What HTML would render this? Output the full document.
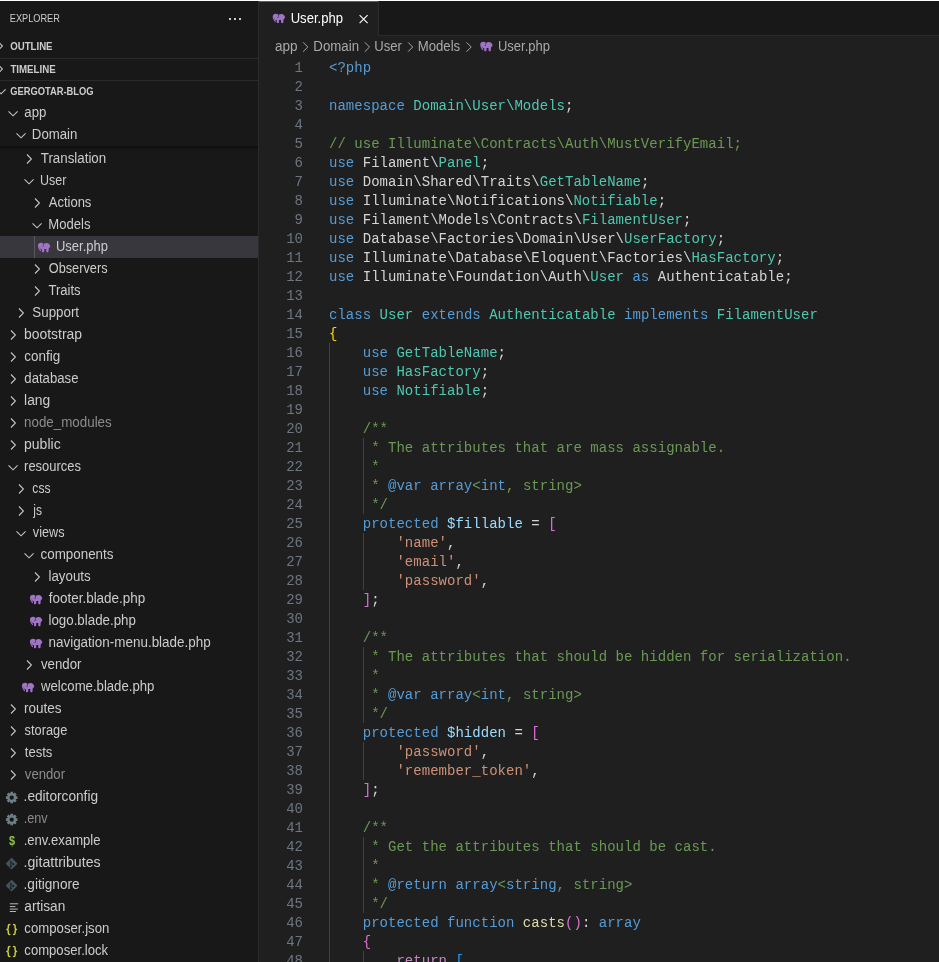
<!DOCTYPE html>
<html><head><meta charset="utf-8"><title>User.php</title>
<style>
*{box-sizing:border-box;margin:0;padding:0}
html,body{width:939px;height:962px;overflow:hidden;background:#1f1f1f}
body{font-family:"Liberation Sans",sans-serif;font-size:13px;color:#cccccc;position:relative}
#tl0{position:absolute;left:0;top:0;width:939px;height:1px;background:#ffffff}
#tl1b{position:absolute;left:259px;top:1px;width:119px;height:1px;background:#0078d4}

#side{position:absolute;left:0;top:0;width:259px;height:962px;background:#181818;border-right:1px solid #2b2b2b;overflow:hidden}
#side .title{position:absolute;left:10px;top:11px;font-size:11px;line-height:14px;color:#cccccc;white-space:nowrap}
.dt{position:absolute;top:18px;width:2px;height:2px;background:#cccccc}
.ph{position:absolute;left:0;width:258px;height:22px;font-size:11px;font-weight:bold;line-height:22px;color:#cccccc}
.ph span.pt{position:absolute;left:10px;top:0;transform-origin:0 50%;white-space:nowrap}
.ph .tw{position:absolute;left:-9px;top:3px;width:16px;height:16px}
.sep{position:absolute;left:0;width:258px;height:1px;background:#2b2b2b}
.row{position:absolute;left:0;width:258px;height:22px;line-height:22px;font-size:14px;color:#cccccc;white-space:nowrap}
.row.sel{background:#37373d}
.row.dim .lb{color:#8c8c8c}
.row .lb{position:absolute;top:0;}
.row .tw{position:absolute;top:3px;width:16px;height:16px}
.ch{position:absolute;left:0;top:0}
.row .fi{position:absolute;top:0;width:16px;height:22px}
.ic{position:absolute;left:2px;top:7px}
.ic2{position:absolute;left:0px;top:3px}
.gl{position:absolute;left:2px;top:0;font-size:13px}
.shadow{position:absolute;left:0;top:146px;width:258px;height:4px;background:linear-gradient(#0d0d0d,rgba(13,13,13,0))}
.tg{position:absolute;width:1px;background:#585858}
#tabs{position:absolute;left:259px;top:0;width:680px;height:36px;background:#181818;border-bottom:1px solid #2b2b2b}
#tab{position:absolute;left:0;top:0;width:120px;height:36px;background:#1f1f1f;border-right:1px solid #2b2b2b}
#tab .nm{position:absolute;left:32px;top:11px;font-size:14px;line-height:16px;color:#ffffff}
#bc{position:absolute;left:259px;top:35px;width:680px;height:22px;line-height:22px;font-size:14px;color:#a9a9a9;white-space:nowrap}
#bc span{position:absolute;top:1px;}
#code{position:absolute;left:259px;top:59px;width:680px;font-family:"Liberation Mono",monospace;font-size:14px;line-height:19px;letter-spacing:0.027px}
.ln{height:19px;white-space:pre;position:relative}
.no{position:absolute;left:0;width:44px;text-align:right;color:#6e7681}
.cd{position:absolute;left:70px}
.ig{position:absolute;width:1px;background:#404040}
.k{color:#569cd6}.t{color:#4ec9b0}.c{color:#6a9955}.s{color:#ce9178}.v{color:#9cdcfe}.f{color:#dcdcaa}.w{color:#d4d4d4}
.b1{color:#ffd700}.b2{color:#da70d6}.b3{color:#179fff}.r{color:#c586c0}
#root{position:absolute;left:0;top:0;width:939px;height:962px;will-change:transform}
</style></head><body><div id="root">
<div id="side">
<div class="title" id="title" style="transform:translate(-0.23px,0px) scaleX(0.8357);transform-origin:0 50%;">EXPLORER</div>
<i class="dt" style="left:229px"></i><i class="dt" style="left:234px"></i><i class="dt" style="left:239px"></i>
<div class="ph" style="top:35px"><span class="tw"><svg class="ch" viewBox="0 0 16 16" width="16" height="16"><path fill="none" stroke="#c5c5c5" stroke-width="1.1" d="M7 3.500L11.400 8L7 12.500"/></svg></span><span class="pt" id="p0" style="transform:translate(0.18px,0px) scaleX(0.8775);transform-origin:0 50%;">OUTLINE</span></div>
<div class="sep" style="top:58px"></div>
<div class="ph" style="top:58px"><span class="tw"><svg class="ch" viewBox="0 0 16 16" width="16" height="16"><path fill="none" stroke="#c5c5c5" stroke-width="1.1" d="M7 3.500L11.400 8L7 12.500"/></svg></span><span class="pt" id="p1" style="transform:translate(0.4px,0px) scaleX(0.8824);transform-origin:0 50%;">TIMELINE</span></div>
<div class="sep" style="top:80px"></div>
<div class="ph" style="top:80px"><span class="tw" style="left:-8px"><svg class="ch" viewBox="0 0 16 16" width="16" height="16"><path fill="none" stroke="#c5c5c5" stroke-width="1.1" d="M4.500 6.400L9.050 10.800L13.600 6.400"/></svg></span><span class="pt" id="p2" style="transform:translate(0.19px,0px) scaleX(0.8494);transform-origin:0 50%;">GERGOTAR-BLOG</span></div>
<div class="row" style="top:102px"><span class="tw" style="left:4px"><svg class="ch" viewBox="0 0 16 16" width="16" height="16"><path fill="none" stroke="#c5c5c5" stroke-width="1.1" d="M4.500 6.400L9.050 10.800L13.600 6.400"/></svg></span><span class="lb" id="r0" style="left:24px;transform:translate(0.33px,-0.6px) scaleX(0.9438);transform-origin:0 50%;">app</span></div>
<div class="row" style="top:124px"><span class="tw" style="left:12px"><svg class="ch" viewBox="0 0 16 16" width="16" height="16"><path fill="none" stroke="#c5c5c5" stroke-width="1.1" d="M4.500 6.400L9.050 10.800L13.600 6.400"/></svg></span><span class="lb" id="r1" style="left:32px;transform:translate(-0.14px,-0.6px) scaleX(0.9441);transform-origin:0 50%;">Domain</span></div>
<div class="row" style="top:148px"><span class="tw" style="left:20px"><svg class="ch" viewBox="0 0 16 16" width="16" height="16"><path fill="none" stroke="#c5c5c5" stroke-width="1.1" d="M7 3.500L11.400 8L7 12.500"/></svg></span><span class="lb" id="r2" style="left:40px;transform:translate(0.76px,-0.6px) scaleX(0.952);transform-origin:0 50%;">Translation</span></div>
<div class="row" style="top:170px"><span class="tw" style="left:20px"><svg class="ch" viewBox="0 0 16 16" width="16" height="16"><path fill="none" stroke="#c5c5c5" stroke-width="1.1" d="M4.500 6.400L9.050 10.800L13.600 6.400"/></svg></span><span class="lb" id="r3" style="left:40px;transform:translate(0.11px,-0.6px) scaleX(0.8912);transform-origin:0 50%;">User</span></div>
<div class="row" style="top:192px"><span class="tw" style="left:28px"><svg class="ch" viewBox="0 0 16 16" width="16" height="16"><path fill="none" stroke="#c5c5c5" stroke-width="1.1" d="M7 3.500L11.400 8L7 12.500"/></svg></span><span class="lb" id="r4" style="left:48px;transform:translate(0.7px,-0.6px) scaleX(0.9297);transform-origin:0 50%;">Actions</span></div>
<div class="row" style="top:214px"><span class="tw" style="left:28px"><svg class="ch" viewBox="0 0 16 16" width="16" height="16"><path fill="none" stroke="#c5c5c5" stroke-width="1.1" d="M4.500 6.400L9.050 10.800L13.600 6.400"/></svg></span><span class="lb" id="r5" style="left:48px;transform:translate(0.27px,-0.6px) scaleX(0.9349);transform-origin:0 50%;">Models</span></div>
<div class="row sel" style="top:236px"><span class="fi" style="left:36px"><svg style="position:absolute;left:1px;top:6px" viewBox="0 0 14 11" width="14" height="11"><g transform="translate(0.9,0.8)"><path fill="#a074c4" d="M5.45 0.7C4.9 0.25 4.1 0 3.1 0C1.300 0 0 1.200 0 3C0 4.400 0.500 5.600 1.200 6.800C1.700 7.600 2.200 8.400 2.800 8.400C3.200 8.400 3.300 8 3.100 7.600L2.600 6.500L3.400 6.300L4.100 6.600L4.100 8.700C4.100 9.100 4.400 9.350 4.800 9.350L5.600 9.350C6 9.350 6.300 9.100 6.300 8.700L6.400 6.300L8.300 6.300L8.400 8.700C8.400 9.100 8.700 9.350 9.100 9.350L9.900 9.350C10.300 9.350 10.600 9.100 10.600 8.700L10.800 5.800C11.500 5.200 12.100 4.300 12.400 3.500C12 1.600 10.600 0.250 8.800 0.250C7.600 0.250 6.600 0.600 6 1.100L5.900 3.200C5.800 3.900 5.200 4.300 4.600 4.200L4.600 3.800C5.200 3.800 5.500 3.500 5.500 3Z"/><path stroke="#37373d" stroke-width="0.45" d="M1.300 5L2.900 6.300"/></g></svg></span><span class="lb" id="r6" style="left:56px;transform:translate(-0.03px,-0.6px) scaleX(0.9266);transform-origin:0 50%;">User.php</span></div>
<div class="row" style="top:258px"><span class="tw" style="left:28px"><svg class="ch" viewBox="0 0 16 16" width="16" height="16"><path fill="none" stroke="#c5c5c5" stroke-width="1.1" d="M7 3.500L11.400 8L7 12.500"/></svg></span><span class="lb" id="r7" style="left:48px;transform:translate(0.75px,-0.6px) scaleX(0.9098);transform-origin:0 50%;">Observers</span></div>
<div class="row" style="top:280px"><span class="tw" style="left:28px"><svg class="ch" viewBox="0 0 16 16" width="16" height="16"><path fill="none" stroke="#c5c5c5" stroke-width="1.1" d="M7 3.500L11.400 8L7 12.500"/></svg></span><span class="lb" id="r8" style="left:48px;transform:translate(0.47px,-0.6px) scaleX(0.9333);transform-origin:0 50%;">Traits</span></div>
<div class="row" style="top:302px"><span class="tw" style="left:12px"><svg class="ch" viewBox="0 0 16 16" width="16" height="16"><path fill="none" stroke="#c5c5c5" stroke-width="1.1" d="M7 3.500L11.400 8L7 12.500"/></svg></span><span class="lb" id="r9" style="left:32px;transform:translate(0.32px,-0.6px) scaleX(0.9526);transform-origin:0 50%;">Support</span></div>
<div class="row" style="top:324px"><span class="tw" style="left:4px"><svg class="ch" viewBox="0 0 16 16" width="16" height="16"><path fill="none" stroke="#c5c5c5" stroke-width="1.1" d="M7 3.500L11.400 8L7 12.500"/></svg></span><span class="lb" id="r10" style="left:24px;transform:translate(0.06px,-0.6px) scaleX(0.993);transform-origin:0 50%;">bootstrap</span></div>
<div class="row" style="top:346px"><span class="tw" style="left:4px"><svg class="ch" viewBox="0 0 16 16" width="16" height="16"><path fill="none" stroke="#c5c5c5" stroke-width="1.1" d="M7 3.500L11.400 8L7 12.500"/></svg></span><span class="lb" id="r11" style="left:24px;transform:translate(0.32px,-0.6px) scaleX(0.9611);transform-origin:0 50%;">config</span></div>
<div class="row" style="top:368px"><span class="tw" style="left:4px"><svg class="ch" viewBox="0 0 16 16" width="16" height="16"><path fill="none" stroke="#c5c5c5" stroke-width="1.1" d="M7 3.500L11.400 8L7 12.500"/></svg></span><span class="lb" id="r12" style="left:24px;transform:translate(0.33px,-0.6px) scaleX(0.9398);transform-origin:0 50%;">database</span></div>
<div class="row" style="top:390px"><span class="tw" style="left:4px"><svg class="ch" viewBox="0 0 16 16" width="16" height="16"><path fill="none" stroke="#c5c5c5" stroke-width="1.1" d="M7 3.500L11.400 8L7 12.500"/></svg></span><span class="lb" id="r13" style="left:24px;transform:translate(0.06px,-0.6px) scaleX(0.988);transform-origin:0 50%;">lang</span></div>
<div class="row dim" style="top:412px"><span class="tw" style="left:4px"><svg class="ch" viewBox="0 0 16 16" width="16" height="16"><path fill="none" stroke="#c5c5c5" stroke-width="1.1" d="M7 3.500L11.400 8L7 12.500"/></svg></span><span class="lb" id="r14" style="left:24px;transform:translate(0.08px,-0.6px) scaleX(0.9543);transform-origin:0 50%;">node_modules</span></div>
<div class="row" style="top:434px"><span class="tw" style="left:4px"><svg class="ch" viewBox="0 0 16 16" width="16" height="16"><path fill="none" stroke="#c5c5c5" stroke-width="1.1" d="M7 3.500L11.400 8L7 12.500"/></svg></span><span class="lb" id="r15" style="left:24px;transform:translate(0.05px,-0.6px) scaleX(1.0);transform-origin:0 50%;">public</span></div>
<div class="row" style="top:456px"><span class="tw" style="left:4px"><svg class="ch" viewBox="0 0 16 16" width="16" height="16"><path fill="none" stroke="#c5c5c5" stroke-width="1.1" d="M4.500 6.400L9.050 10.800L13.600 6.400"/></svg></span><span class="lb" id="r16" style="left:24px;transform:translate(0.11px,-0.6px) scaleX(0.9245);transform-origin:0 50%;">resources</span></div>
<div class="row" style="top:478px"><span class="tw" style="left:12px"><svg class="ch" viewBox="0 0 16 16" width="16" height="16"><path fill="none" stroke="#c5c5c5" stroke-width="1.1" d="M7 3.500L11.400 8L7 12.500"/></svg></span><span class="lb" id="r17" style="left:32px;transform:translate(0.37px,-0.6px) scaleX(0.86);transform-origin:0 50%;">css</span></div>
<div class="row" style="top:500px"><span class="tw" style="left:12px"><svg class="ch" viewBox="0 0 16 16" width="16" height="16"><path fill="none" stroke="#c5c5c5" stroke-width="1.1" d="M7 3.500L11.400 8L7 12.500"/></svg></span><span class="lb" id="r18" style="left:32px;transform:translate(1.23px,-0.6px) scaleX(0.8585);transform-origin:0 50%;">js</span></div>
<div class="row" style="top:522px"><span class="tw" style="left:12px"><svg class="ch" viewBox="0 0 16 16" width="16" height="16"><path fill="none" stroke="#c5c5c5" stroke-width="1.1" d="M4.500 6.400L9.050 10.800L13.600 6.400"/></svg></span><span class="lb" id="r19" style="left:32px;transform:translate(0.8px,-0.6px) scaleX(0.9043);transform-origin:0 50%;">views</span></div>
<div class="row" style="top:544px"><span class="tw" style="left:20px"><svg class="ch" viewBox="0 0 16 16" width="16" height="16"><path fill="none" stroke="#c5c5c5" stroke-width="1.1" d="M4.500 6.400L9.050 10.800L13.600 6.400"/></svg></span><span class="lb" id="r20" style="left:40px;transform:translate(0.52px,-0.6px) scaleX(0.9568);transform-origin:0 50%;">components</span></div>
<div class="row" style="top:566px"><span class="tw" style="left:28px"><svg class="ch" viewBox="0 0 16 16" width="16" height="16"><path fill="none" stroke="#c5c5c5" stroke-width="1.1" d="M7 3.500L11.400 8L7 12.500"/></svg></span><span class="lb" id="r21" style="left:48px;transform:translate(0.49px,-0.6px) scaleX(0.9503);transform-origin:0 50%;">layouts</span></div>
<div class="row" style="top:588px"><span class="fi" style="left:28px"><svg style="position:absolute;left:1px;top:6px" viewBox="0 0 14 11" width="14" height="11"><g transform="translate(0.9,0.8)"><path fill="#a074c4" d="M5.45 0.7C4.9 0.25 4.1 0 3.1 0C1.300 0 0 1.200 0 3C0 4.400 0.500 5.600 1.200 6.800C1.700 7.600 2.200 8.400 2.800 8.400C3.200 8.400 3.300 8 3.100 7.600L2.600 6.500L3.400 6.300L4.100 6.600L4.100 8.700C4.100 9.100 4.400 9.350 4.800 9.350L5.600 9.350C6 9.350 6.300 9.100 6.300 8.700L6.400 6.300L8.300 6.300L8.400 8.700C8.400 9.100 8.700 9.350 9.100 9.350L9.900 9.350C10.300 9.350 10.600 9.100 10.600 8.700L10.800 5.800C11.500 5.200 12.100 4.300 12.400 3.500C12 1.600 10.600 0.250 8.800 0.250C7.600 0.250 6.600 0.600 6 1.100L5.900 3.200C5.800 3.900 5.200 4.300 4.600 4.200L4.600 3.800C5.200 3.800 5.500 3.500 5.500 3Z"/><path stroke="#181818" stroke-width="0.45" d="M1.300 5L2.900 6.300"/></g></svg></span><span class="lb" id="r22" style="left:48px;transform:translate(0.7px,-0.6px) scaleX(0.962);transform-origin:0 50%;">footer.blade.php</span></div>
<div class="row" style="top:610px"><span class="fi" style="left:28px"><svg style="position:absolute;left:1px;top:6px" viewBox="0 0 14 11" width="14" height="11"><g transform="translate(0.9,0.8)"><path fill="#a074c4" d="M5.45 0.7C4.9 0.25 4.1 0 3.1 0C1.300 0 0 1.200 0 3C0 4.400 0.500 5.600 1.200 6.800C1.700 7.600 2.200 8.400 2.800 8.400C3.200 8.400 3.300 8 3.100 7.600L2.600 6.500L3.400 6.300L4.100 6.600L4.100 8.700C4.100 9.100 4.400 9.350 4.800 9.350L5.600 9.350C6 9.350 6.300 9.100 6.300 8.700L6.400 6.300L8.300 6.300L8.400 8.700C8.400 9.100 8.700 9.350 9.100 9.350L9.900 9.350C10.300 9.350 10.600 9.100 10.600 8.700L10.800 5.800C11.500 5.200 12.100 4.300 12.400 3.500C12 1.600 10.600 0.250 8.800 0.250C7.600 0.250 6.600 0.600 6 1.100L5.900 3.200C5.800 3.900 5.200 4.300 4.600 4.200L4.600 3.800C5.200 3.800 5.500 3.500 5.500 3Z"/><path stroke="#181818" stroke-width="0.45" d="M1.300 5L2.900 6.300"/></g></svg></span><span class="lb" id="r23" style="left:48px;transform:translate(0.49px,-0.6px) scaleX(0.9514);transform-origin:0 50%;">logo.blade.php</span></div>
<div class="row" style="top:632px"><span class="fi" style="left:28px"><svg style="position:absolute;left:1px;top:6px" viewBox="0 0 14 11" width="14" height="11"><g transform="translate(0.9,0.8)"><path fill="#a074c4" d="M5.45 0.7C4.9 0.25 4.1 0 3.1 0C1.300 0 0 1.200 0 3C0 4.400 0.500 5.600 1.200 6.800C1.700 7.600 2.200 8.400 2.800 8.400C3.200 8.400 3.300 8 3.100 7.600L2.600 6.500L3.400 6.300L4.100 6.600L4.100 8.700C4.100 9.100 4.400 9.350 4.800 9.350L5.600 9.350C6 9.350 6.300 9.100 6.300 8.700L6.400 6.300L8.300 6.300L8.400 8.700C8.400 9.100 8.700 9.350 9.100 9.350L9.900 9.350C10.300 9.350 10.600 9.100 10.600 8.700L10.800 5.800C11.500 5.200 12.100 4.300 12.400 3.500C12 1.600 10.600 0.250 8.800 0.250C7.600 0.250 6.600 0.600 6 1.100L5.900 3.200C5.800 3.900 5.200 4.300 4.600 4.200L4.600 3.800C5.200 3.800 5.500 3.500 5.500 3Z"/><path stroke="#181818" stroke-width="0.45" d="M1.300 5L2.900 6.300"/></g></svg></span><span class="lb" id="r24" style="left:48px;transform:translate(0.48px,-0.6px) scaleX(0.9604);transform-origin:0 50%;">navigation-menu.blade.php</span></div>
<div class="row" style="top:654px"><span class="tw" style="left:20px"><svg class="ch" viewBox="0 0 16 16" width="16" height="16"><path fill="none" stroke="#c5c5c5" stroke-width="1.1" d="M7 3.500L11.400 8L7 12.500"/></svg></span><span class="lb" id="r25" style="left:40px;transform:translate(1.0px,-0.6px) scaleX(0.945);transform-origin:0 50%;">vendor</span></div>
<div class="row" style="top:676px"><span class="fi" style="left:20px"><svg style="position:absolute;left:1px;top:6px" viewBox="0 0 14 11" width="14" height="11"><g transform="translate(0.9,0.8)"><path fill="#a074c4" d="M5.45 0.7C4.9 0.25 4.1 0 3.1 0C1.300 0 0 1.200 0 3C0 4.400 0.500 5.600 1.200 6.800C1.700 7.600 2.200 8.400 2.800 8.400C3.200 8.400 3.300 8 3.100 7.600L2.600 6.500L3.400 6.300L4.100 6.600L4.100 8.700C4.100 9.100 4.400 9.350 4.800 9.350L5.600 9.350C6 9.350 6.300 9.100 6.300 8.700L6.400 6.300L8.300 6.300L8.400 8.700C8.400 9.100 8.700 9.350 9.100 9.350L9.900 9.350C10.300 9.350 10.600 9.100 10.600 8.700L10.800 5.800C11.500 5.200 12.100 4.300 12.400 3.500C12 1.600 10.600 0.250 8.800 0.250C7.600 0.250 6.600 0.600 6 1.100L5.900 3.200C5.800 3.900 5.200 4.300 4.600 4.200L4.600 3.800C5.200 3.800 5.500 3.500 5.500 3Z"/><path stroke="#181818" stroke-width="0.45" d="M1.300 5L2.900 6.300"/></g></svg></span><span class="lb" id="r26" style="left:40px;transform:translate(1.0px,-0.6px) scaleX(0.9397);transform-origin:0 50%;">welcome.blade.php</span></div>
<div class="row" style="top:698px"><span class="tw" style="left:4px"><svg class="ch" viewBox="0 0 16 16" width="16" height="16"><path fill="none" stroke="#c5c5c5" stroke-width="1.1" d="M7 3.500L11.400 8L7 12.500"/></svg></span><span class="lb" id="r27" style="left:24px;transform:translate(0.08px,-0.6px) scaleX(0.9642);transform-origin:0 50%;">routes</span></div>
<div class="row" style="top:720px"><span class="tw" style="left:4px"><svg class="ch" viewBox="0 0 16 16" width="16" height="16"><path fill="none" stroke="#c5c5c5" stroke-width="1.1" d="M7 3.500L11.400 8L7 12.500"/></svg></span><span class="lb" id="r28" style="left:24px;transform:translate(0.57px,-0.6px) scaleX(0.9152);transform-origin:0 50%;">storage</span></div>
<div class="row" style="top:742px"><span class="tw" style="left:4px"><svg class="ch" viewBox="0 0 16 16" width="16" height="16"><path fill="none" stroke="#c5c5c5" stroke-width="1.1" d="M7 3.500L11.400 8L7 12.500"/></svg></span><span class="lb" id="r29" style="left:24px;transform:translate(0.8px,-0.6px) scaleX(0.9333);transform-origin:0 50%;">tests</span></div>
<div class="row dim" style="top:764px"><span class="tw" style="left:4px"><svg class="ch" viewBox="0 0 16 16" width="16" height="16"><path fill="none" stroke="#c5c5c5" stroke-width="1.1" d="M7 3.500L11.400 8L7 12.500"/></svg></span><span class="lb" id="r30" style="left:24px;transform:translate(0.8px,-0.6px) scaleX(0.9404);transform-origin:0 50%;">vendor</span></div>
<div class="row" style="top:786px"><span class="fi" style="left:4px"><svg class="ic2" viewBox="0 0 16 16" width="16" height="16"><g transform="translate(0,0.5)"><path fill="#6d8086" fill-rule="evenodd" d="M12.00 6.77 L13.46 6.81 L13.46 9.39 L12.00 9.43 L11.68 10.20 L12.68 11.26 L10.86 13.08 L9.80 12.08 L9.03 12.40 L8.99 13.86 L6.41 13.86 L6.37 12.40 L5.60 12.08 L4.54 13.08 L2.72 11.26 L3.72 10.20 L3.40 9.43 L1.94 9.39 L1.94 6.81 L3.40 6.77 L3.72 6.00 L2.72 4.94 L4.54 3.12 L5.60 4.12 L6.37 3.80 L6.41 2.34 L8.99 2.34 L9.03 3.80 L9.80 4.12 L10.86 3.12 L12.68 4.94 L11.68 6.00Z M9.90 8.10 A2.2 2.2 0 1 0 5.50 8.10 A2.2 2.2 0 1 0 9.90 8.10Z"/></g></svg></span><span class="lb" id="r31" style="left:24px;transform:translate(-0.42px,-0.6px) scaleX(0.9764);transform-origin:0 50%;">.editorconfig</span></div>
<div class="row dim" style="top:808px"><span class="fi" style="left:4px"><svg class="ic2" viewBox="0 0 16 16" width="16" height="16"><g transform="translate(0,0.5)"><path fill="#6d8086" fill-rule="evenodd" d="M12.00 6.77 L13.46 6.81 L13.46 9.39 L12.00 9.43 L11.68 10.20 L12.68 11.26 L10.86 13.08 L9.80 12.08 L9.03 12.40 L8.99 13.86 L6.41 13.86 L6.37 12.40 L5.60 12.08 L4.54 13.08 L2.72 11.26 L3.72 10.20 L3.40 9.43 L1.94 9.39 L1.94 6.81 L3.40 6.77 L3.72 6.00 L2.72 4.94 L4.54 3.12 L5.60 4.12 L6.37 3.80 L6.41 2.34 L8.99 2.34 L9.03 3.80 L9.80 4.12 L10.86 3.12 L12.68 4.94 L11.68 6.00Z M9.90 8.10 A2.2 2.2 0 1 0 5.50 8.10 A2.2 2.2 0 1 0 9.90 8.10Z"/></g></svg></span><span class="lb" id="r32" style="left:24px;transform:translate(-0.33px,-0.6px) scaleX(0.903);transform-origin:0 50%;">.env</span></div>
<div class="row" style="top:830px"><span class="fi" style="left:4px"><span class="gl" style="color:#8dc149;font-weight:bold;font-size:12.500px;left:4.800px;top:0;transform:translateY(-0.500px) scaleX(0.88);transform-origin:0 50%">$</span></span><span class="lb" id="r33" style="left:24px;transform:translate(-0.37px,-0.6px) scaleX(0.9354);transform-origin:0 50%;">.env.example</span></div>
<div class="row" style="top:852px"><span class="fi" style="left:4px"><svg class="ic2" viewBox="0 0 16 16" width="16" height="16"><g transform="translate(0,0.5)"><path fill="#41535b" d="M7.600 2.100Q7.600 2.100 8.200 2.700L13 7.500Q13.600 8.100 13 8.700L8.200 13.500Q7.600 14.100 7 13.500L2.200 8.700Q1.600 8.100 2.200 7.500L7 2.700Q7.600 2.100 7.600 2.100Z"/><path fill="none" stroke="#181818" stroke-width="0.9" d="M6.800 5.200V11M6.900 6.300L9.200 8.600"/><circle cx="6.800" cy="11" r="0.900" fill="#181818"/><circle cx="9.300" cy="8.700" r="0.900" fill="#181818"/></g></svg></span><span class="lb" id="r34" style="left:24px;transform:translate(-0.46px,-0.6px) scaleX(1.0107);transform-origin:0 50%;">.gitattributes</span></div>
<div class="row" style="top:874px"><span class="fi" style="left:4px"><svg class="ic2" viewBox="0 0 16 16" width="16" height="16"><g transform="translate(0,0.5)"><path fill="#41535b" d="M7.600 2.100Q7.600 2.100 8.200 2.700L13 7.500Q13.600 8.100 13 8.700L8.200 13.500Q7.600 14.100 7 13.500L2.200 8.700Q1.600 8.100 2.200 7.500L7 2.700Q7.600 2.100 7.600 2.100Z"/><path fill="none" stroke="#181818" stroke-width="0.9" d="M6.800 5.200V11M6.900 6.300L9.200 8.600"/><circle cx="6.800" cy="11" r="0.900" fill="#181818"/><circle cx="9.300" cy="8.700" r="0.900" fill="#181818"/></g></svg></span><span class="lb" id="r35" style="left:24px;transform:translate(-0.42px,-0.6px) scaleX(0.9722);transform-origin:0 50%;">.gitignore</span></div>
<div class="row" style="top:896px"><span class="fi" style="left:4px"><svg class="ic2" viewBox="0 0 16 16" width="16" height="16"><g transform="translate(0,0.5)"><path stroke="#d4d7d6" stroke-width="0.85" d="M5.800 4.300h8.400M5.800 7.100h5.600M5.800 9.600h8M5.800 12h6.100"/></g></svg></span><span class="lb" id="r36" style="left:24px;transform:translate(0.31px,-0.6px) scaleX(0.9742);transform-origin:0 50%;">artisan</span></div>
<div class="row" style="top:918px"><span class="fi" style="left:4px"><svg class="ic2" viewBox="0 0 16 16" width="16" height="16"><g transform="translate(0,0.5)"><path fill="none" stroke="#cbcb41" stroke-width="1.5" stroke-linecap="round" stroke-linejoin="round" d="M5.800 2.900C4.500 2.900 4.300 3.500 4.300 4.500L4.300 6.300C4.300 7.400 3.800 7.900 2.900 8C3.800 8.100 4.300 8.600 4.300 9.700L4.300 11.500C4.300 12.500 4.500 13.100 5.800 13.100M9.600 2.900C10.900 2.900 11.100 3.500 11.100 4.500L11.100 6.300C11.100 7.400 11.600 7.900 12.500 8C11.600 8.100 11.100 8.600 11.100 9.700L11.100 11.500C11.100 12.500 10.900 13.100 9.600 13.100"/></g></svg></span><span class="lb" id="r37" style="left:24px;transform:translate(0.33px,-0.6px) scaleX(0.9416);transform-origin:0 50%;">composer.json</span></div>
<div class="row" style="top:940px"><span class="fi" style="left:4px"><svg class="ic2" viewBox="0 0 16 16" width="16" height="16"><g transform="translate(0,0.5)"><path fill="none" stroke="#cbcb41" stroke-width="1.5" stroke-linecap="round" stroke-linejoin="round" d="M5.800 2.900C4.500 2.900 4.300 3.500 4.300 4.500L4.300 6.300C4.300 7.400 3.800 7.900 2.900 8C3.800 8.100 4.300 8.600 4.300 9.700L4.300 11.500C4.300 12.500 4.500 13.100 5.800 13.100M9.600 2.900C10.900 2.900 11.100 3.500 11.100 4.500L11.100 6.300C11.100 7.400 11.600 7.900 12.500 8C11.600 8.100 11.100 8.600 11.100 9.700L11.100 11.500C11.100 12.500 10.900 13.100 9.600 13.100"/></g></svg></span><span class="lb" id="r38" style="left:24px;transform:translate(0.33px,-0.6px) scaleX(0.936);transform-origin:0 50%;">composer.lock</span></div>
<div class="shadow"></div>
<div class="tg" style="left:34px;top:236px;height:22px"></div>
</div>
<div id="tabs"><div id="tab"><svg style="position:absolute;left:13px;top:13px" viewBox="0 0 14 11" width="14" height="11"><g transform="translate(0.7,0.75)"><path fill="#a074c4" d="M5.45 0.7C4.9 0.25 4.1 0 3.1 0C1.300 0 0 1.200 0 3C0 4.400 0.500 5.600 1.200 6.800C1.700 7.600 2.200 8.400 2.800 8.400C3.200 8.400 3.300 8 3.100 7.600L2.600 6.500L3.400 6.300L4.100 6.600L4.100 8.700C4.100 9.100 4.400 9.350 4.800 9.350L5.600 9.350C6 9.350 6.300 9.100 6.300 8.700L6.400 6.300L8.300 6.300L8.400 8.700C8.400 9.100 8.700 9.350 9.100 9.350L9.900 9.350C10.300 9.350 10.600 9.100 10.600 8.700L10.800 5.800C11.500 5.200 12.100 4.300 12.400 3.500C12 1.600 10.600 0.250 8.800 0.250C7.600 0.250 6.600 0.600 6 1.100L5.900 3.200C5.800 3.900 5.200 4.300 4.600 4.200L4.600 3.800C5.200 3.800 5.500 3.500 5.500 3Z"/><path stroke="#1f1f1f" stroke-width="0.45" d="M1.300 5L2.900 6.300"/></g></svg><span class="nm" id="tabnm" style="transform:translate(-0.33px,-0.6px) scaleX(0.9339);transform-origin:0 50%;">User.php</span>
<svg style="position:absolute;left:100px;top:14px" width="10" height="11" viewBox="0 0 10 11"><path stroke="#ffffff" stroke-width="1.100" d="M0.600 1.100l8 8M8.600 1.100l-8 8"/></svg></div></div>
<div id="bc"><span id="bc0" style="left:16px;transform:translate(-0.08px,-0.6px) scaleX(0.9663);transform-origin:0 50%;">app</span><svg style="position:absolute;left:37px;top:4px" viewBox="0 0 17 16" width="17" height="16"><path transform="translate(0.8,0)" fill="none" stroke="#a9a9a9" stroke-width="1" d="M6.300 3.300L11 8L6.300 12.700"/></svg><span id="bc1" style="left:55px;transform:translate(-0.65px,-0.6px) scaleX(0.9462);transform-origin:0 50%;">Domain</span><svg style="position:absolute;left:99px;top:4px" viewBox="0 0 17 16" width="17" height="16"><path transform="translate(0.5,0)" fill="none" stroke="#a9a9a9" stroke-width="1" d="M6.300 3.300L11 8L6.300 12.700"/></svg><span id="bc2" style="left:116px;transform:translate(-0.73px,-0.6px) scaleX(0.9333);transform-origin:0 50%;">User</span><svg style="position:absolute;left:142px;top:4px" viewBox="0 0 17 16" width="17" height="16"><path transform="translate(0.7,0)" fill="none" stroke="#a9a9a9" stroke-width="1" d="M6.300 3.300L11 8L6.300 12.700"/></svg><span id="bc3" style="left:159px;transform:translate(-0.34px,-0.6px) scaleX(0.9417);transform-origin:0 50%;">Models</span><svg style="position:absolute;left:201px;top:4px" viewBox="0 0 17 16" width="17" height="16"><path transform="translate(0.2,0)" fill="none" stroke="#a9a9a9" stroke-width="1" d="M6.300 3.300L11 8L6.300 12.700"/></svg><svg style="position:absolute;left:221px;top:6px" viewBox="0 0 14 11" width="14" height="11"><g transform="translate(0.2,0.8)"><path fill="#a074c4" d="M5.45 0.7C4.9 0.25 4.1 0 3.1 0C1.300 0 0 1.200 0 3C0 4.400 0.500 5.600 1.200 6.800C1.700 7.600 2.200 8.400 2.800 8.400C3.200 8.400 3.300 8 3.100 7.600L2.600 6.500L3.400 6.300L4.100 6.600L4.100 8.700C4.100 9.100 4.400 9.350 4.800 9.350L5.600 9.350C6 9.350 6.300 9.100 6.300 8.700L6.400 6.300L8.300 6.300L8.400 8.700C8.400 9.100 8.700 9.350 9.100 9.350L9.900 9.350C10.300 9.350 10.600 9.100 10.600 8.700L10.800 5.800C11.500 5.200 12.100 4.300 12.400 3.500C12 1.600 10.600 0.250 8.800 0.250C7.600 0.250 6.600 0.600 6 1.100L5.900 3.200C5.800 3.900 5.200 4.300 4.600 4.200L4.600 3.800C5.200 3.800 5.500 3.500 5.500 3Z"/><path stroke="#1f1f1f" stroke-width="0.45" d="M1.300 5L2.900 6.300"/></g></svg><span id="bc4" style="left:239px;transform:translate(-0.03px,-0.6px) scaleX(0.9266);transform-origin:0 50%;">User.php</span></div>
<div class="ig" style="left:329px;top:343px;height:627px"></div><div class="ig" style="left:363px;top:438px;height:76px"></div><div class="ig" style="left:363px;top:533px;height:57px"></div><div class="ig" style="left:363px;top:647px;height:76px"></div><div class="ig" style="left:363px;top:742px;height:38px"></div><div class="ig" style="left:363px;top:837px;height:76px"></div><div class="ig" style="left:363px;top:951px;height:19px"></div>
<div id="code">
<div class="ln"><span class="no">1</span><span class="cd"><span class="k">&lt;?php</span></span></div>
<div class="ln"><span class="no">2</span><span class="cd"></span></div>
<div class="ln"><span class="no">3</span><span class="cd"><span class="k">namespace</span><span class="t"> Domain\User\Models</span><span class="w">;</span></span></div>
<div class="ln"><span class="no">4</span><span class="cd"></span></div>
<div class="ln"><span class="no">5</span><span class="cd"><span class="c">// use Illuminate\Contracts\Auth\MustVerifyEmail;</span></span></div>
<div class="ln"><span class="no">6</span><span class="cd"><span class="k">use</span><span class="w"> Filament\</span><span class="t">Panel</span><span class="w">;</span></span></div>
<div class="ln"><span class="no">7</span><span class="cd"><span class="k">use</span><span class="w"> Domain\Shared\Traits\</span><span class="t">GetTableName</span><span class="w">;</span></span></div>
<div class="ln"><span class="no">8</span><span class="cd"><span class="k">use</span><span class="w"> Illuminate\Notifications\</span><span class="t">Notifiable</span><span class="w">;</span></span></div>
<div class="ln"><span class="no">9</span><span class="cd"><span class="k">use</span><span class="w"> Filament\Models\Contracts\</span><span class="t">FilamentUser</span><span class="w">;</span></span></div>
<div class="ln"><span class="no">10</span><span class="cd"><span class="k">use</span><span class="w"> Database\Factories\Domain\User\</span><span class="t">UserFactory</span><span class="w">;</span></span></div>
<div class="ln"><span class="no">11</span><span class="cd"><span class="k">use</span><span class="w"> Illuminate\Database\Eloquent\Factories\</span><span class="t">HasFactory</span><span class="w">;</span></span></div>
<div class="ln"><span class="no">12</span><span class="cd"><span class="k">use</span><span class="w"> Illuminate\Foundation\Auth\</span><span class="t">User</span><span class="k"> as</span><span class="w"> Authenticatable;</span></span></div>
<div class="ln"><span class="no">13</span><span class="cd"></span></div>
<div class="ln"><span class="no">14</span><span class="cd"><span class="k">class</span><span class="t"> User</span><span class="k"> extends</span><span class="t"> Authenticatable</span><span class="k"> implements</span><span class="t"> FilamentUser</span></span></div>
<div class="ln"><span class="no">15</span><span class="cd"><span class="b1">{</span></span></div>
<div class="ln"><span class="no">16</span><span class="cd"><span class="k">    use</span><span class="t"> GetTableName</span><span class="w">;</span></span></div>
<div class="ln"><span class="no">17</span><span class="cd"><span class="k">    use</span><span class="t"> HasFactory</span><span class="w">;</span></span></div>
<div class="ln"><span class="no">18</span><span class="cd"><span class="k">    use</span><span class="t"> Notifiable</span><span class="w">;</span></span></div>
<div class="ln"><span class="no">19</span><span class="cd"></span></div>
<div class="ln"><span class="no">20</span><span class="cd"><span class="c">    /**</span></span></div>
<div class="ln"><span class="no">21</span><span class="cd"><span class="c">     * The attributes that are mass assignable.</span></span></div>
<div class="ln"><span class="no">22</span><span class="cd"><span class="c">     *</span></span></div>
<div class="ln"><span class="no">23</span><span class="cd"><span class="c">     * </span><span class="k">@var array</span><span class="c">&lt;</span><span class="k">int</span><span class="c">, string&gt;</span></span></div>
<div class="ln"><span class="no">24</span><span class="cd"><span class="c">     */</span></span></div>
<div class="ln"><span class="no">25</span><span class="cd"><span class="k">    protected</span><span class="v"> $fillable</span><span class="w"> = </span><span class="b2">[</span></span></div>
<div class="ln"><span class="no">26</span><span class="cd"><span class="s">        &#x27;name&#x27;</span><span class="w">,</span></span></div>
<div class="ln"><span class="no">27</span><span class="cd"><span class="s">        &#x27;email&#x27;</span><span class="w">,</span></span></div>
<div class="ln"><span class="no">28</span><span class="cd"><span class="s">        &#x27;password&#x27;</span><span class="w">,</span></span></div>
<div class="ln"><span class="no">29</span><span class="cd"><span class="b2">    ]</span><span class="w">;</span></span></div>
<div class="ln"><span class="no">30</span><span class="cd"></span></div>
<div class="ln"><span class="no">31</span><span class="cd"><span class="c">    /**</span></span></div>
<div class="ln"><span class="no">32</span><span class="cd"><span class="c">     * The attributes that should be hidden for serialization.</span></span></div>
<div class="ln"><span class="no">33</span><span class="cd"><span class="c">     *</span></span></div>
<div class="ln"><span class="no">34</span><span class="cd"><span class="c">     * </span><span class="k">@var array</span><span class="c">&lt;</span><span class="k">int</span><span class="c">, string&gt;</span></span></div>
<div class="ln"><span class="no">35</span><span class="cd"><span class="c">     */</span></span></div>
<div class="ln"><span class="no">36</span><span class="cd"><span class="k">    protected</span><span class="v"> $hidden</span><span class="w"> = </span><span class="b2">[</span></span></div>
<div class="ln"><span class="no">37</span><span class="cd"><span class="s">        &#x27;password&#x27;</span><span class="w">,</span></span></div>
<div class="ln"><span class="no">38</span><span class="cd"><span class="s">        &#x27;remember_token&#x27;</span><span class="w">,</span></span></div>
<div class="ln"><span class="no">39</span><span class="cd"><span class="b2">    ]</span><span class="w">;</span></span></div>
<div class="ln"><span class="no">40</span><span class="cd"></span></div>
<div class="ln"><span class="no">41</span><span class="cd"><span class="c">    /**</span></span></div>
<div class="ln"><span class="no">42</span><span class="cd"><span class="c">     * Get the attributes that should be cast.</span></span></div>
<div class="ln"><span class="no">43</span><span class="cd"><span class="c">     *</span></span></div>
<div class="ln"><span class="no">44</span><span class="cd"><span class="c">     * </span><span class="k">@return array</span><span class="c">&lt;</span><span class="k">string</span><span class="c">, string&gt;</span></span></div>
<div class="ln"><span class="no">45</span><span class="cd"><span class="c">     */</span></span></div>
<div class="ln"><span class="no">46</span><span class="cd"><span class="k">    protected function</span><span class="f"> casts</span><span class="b2">()</span><span class="w">:</span><span class="k"> array</span></span></div>
<div class="ln"><span class="no">47</span><span class="cd"><span class="b2">    {</span></span></div>
<div class="ln"><span class="no">48</span><span class="cd"><span class="r">        return</span><span class="b3"> [</span></span></div>
</div>
<div id="tl0"></div><div id="tl1b"></div>
</div></body></html>
